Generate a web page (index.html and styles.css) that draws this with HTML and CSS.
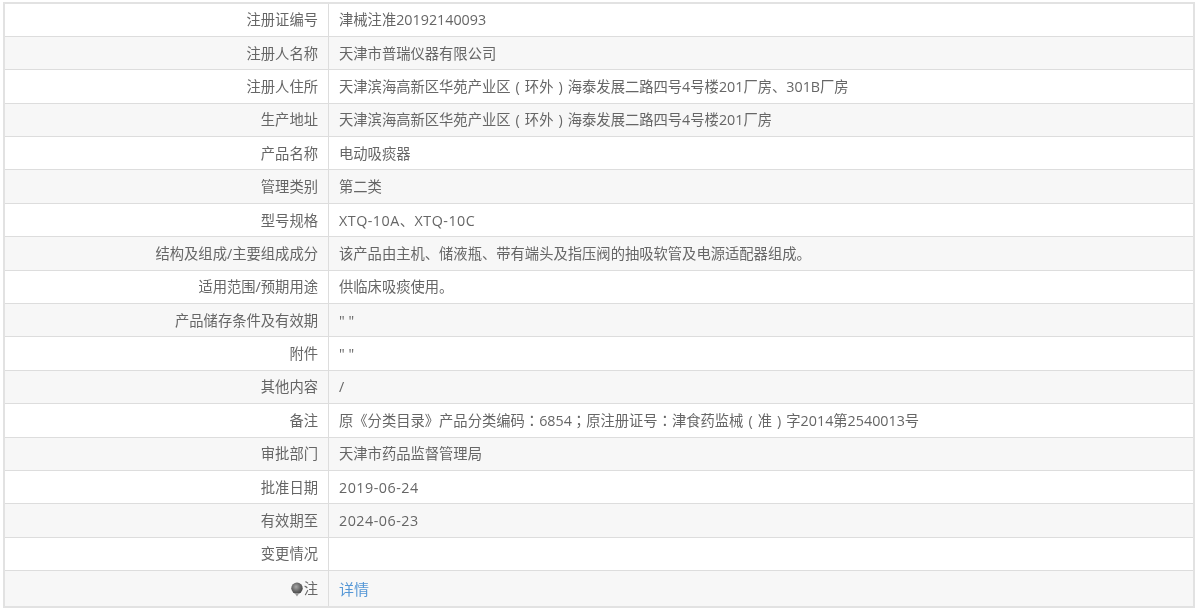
FILE: index.html
```html
<!DOCTYPE html>
<html lang="zh-CN">
<head>
<meta charset="utf-8">
<title>注册证详情</title>
<link rel="stylesheet" href="styles.css">
</head>
<body>
<table class="detail">
<colgroup><col class="col-label"><col></colgroup>
<tbody>
<tr><th>注册证编号</th><td>津械注准20192140093</td></tr>
<tr><th>注册人名称</th><td>天津市普瑞仪器有限公司</td></tr>
<tr><th>注册人住所</th><td>天津滨海高新区华苑产业区<span class="paren">(</span>环外<span class="paren">)</span>海泰发展二路四号4号楼201厂房、301B厂房</td></tr>
<tr><th>生产地址</th><td>天津滨海高新区华苑产业区<span class="paren">(</span>环外<span class="paren">)</span>海泰发展二路四号4号楼201厂房</td></tr>
<tr><th>产品名称</th><td>电动吸痰器</td></tr>
<tr><th>管理类别</th><td>第二类</td></tr>
<tr><th>型号规格</th><td class="spaced">XTQ-10A、XTQ-10C</td></tr>
<tr><th>结构及组成/主要组成成分</th><td>该产品由主机、储液瓶、带有端头及指压阀的抽吸软管及电源适配器组成。</td></tr>
<tr><th>适用范围/预期用途</th><td>供临床吸痰使用。</td></tr>
<tr><th>产品储存条件及有效期</th><td>" "</td></tr>
<tr><th>附件</th><td>" "</td></tr>
<tr><th>其他内容</th><td>/</td></tr>
<tr><th>备注</th><td>原《分类目录》产品分类编码<span class="punct" lang="zh-TW">：</span>6854<span class="punct" lang="zh-TW">；</span>原注册证号<span class="punct" lang="zh-TW">：</span>津食药监械<span class="paren">(</span>准<span class="paren">)</span>字2014第2540013号</td></tr>
<tr><th>审批部门</th><td>天津市药品监督管理局</td></tr>
<tr><th>批准日期</th><td class="spaced">2019-06-24</td></tr>
<tr><th>有效期至</th><td class="spaced">2024-06-23</td></tr>
<tr><th>变更情况</th><td></td></tr>
<tr class="last"><th><svg class="bulb" width="14" height="15" viewBox="0 0 14 15" aria-hidden="true"><defs><radialGradient id="b" cx="0.42" cy="0.38" r="0.7"><stop offset="0" stop-color="#a8a8a8"/><stop offset="0.55" stop-color="#666"/><stop offset="1" stop-color="#3c3c3c"/></radialGradient></defs><circle cx="7" cy="6.2" r="5.7" fill="url(#b)"/><path d="M4.6 11h4.8L7 14.4z" fill="#999"/></svg>注</th><td><a href="#">详情</a></td></tr>
</tbody>
</table>
</body>
</html>
```
FILE: styles.css
```css
html, body { height: 100%; }
body {
  margin: 0;
  padding: 2px 5px 0 3px;
  box-sizing: border-box;
  overflow: hidden;
  background: #fff;
  font-family: "Open Sans", "Noto Sans CJK SC", sans-serif;
  font-size: 14.3px;
  color: #666;
}
.detail {
  width: 100%;
  table-layout: fixed;
  border-collapse: collapse;
  border: 2px solid #e2e2e2;
  filter: blur(0.3px);
}
.col-label { width: 324px; }
.detail tr { height: 33.4px; }
.detail tr.last { height: 36.5px; }
.detail th, .detail td {
  padding: 1px 11px 0 10.5px;
  border-top: 1px solid #ddd;
  font-weight: 400;
  line-height: 20px;
  vertical-align: middle;
}
.detail th {
  padding-right: 9.5px;
  text-align: right;
  border-right: 1px solid #ddd;
}
.detail tr:nth-child(even) { background: #f7f7f7; }
.detail a { color: #5597d6; text-decoration: none; font-size: 15px; }
.punct { font-family: "Noto Sans CJK TC", sans-serif; }
.paren { display: inline-block; width: 1em; text-align: center; }
.spaced { letter-spacing: 0.5px; }
.bulb { vertical-align: -3px; margin-right: 0; }
```
